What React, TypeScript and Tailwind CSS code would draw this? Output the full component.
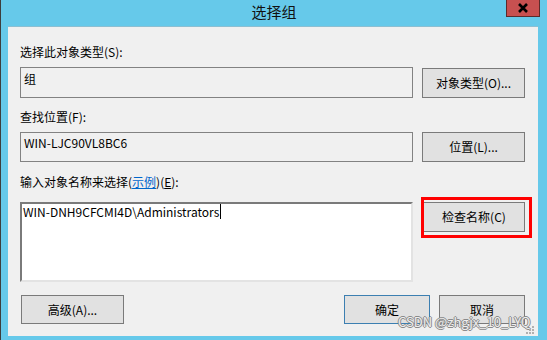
import { ReactNode } from "react";

const font = "font-['Noto_Sans_CJK_SC','Noto_Sans',sans-serif]";

const Button = ({
  children,
  className = "",
  primary = false,
}: {
  children: ReactNode;
  className?: string;
  primary?: boolean;
}) => (
  <div
    className={`flex items-center justify-center bg-[#e1e1e1] border text-[12px] leading-4 text-black ${
      primary ? "border-[#3c7fb1]" : "border-[#7a7a7a]"
    } ${className}`}
  >
    {children}
  </div>
);

const App = () => {
  return (
    <div
      className={`w-[547px] h-[340px] bg-[#66c9ea] border-l border-[#3d3d3d] flex flex-col ${font}`}
    >
      {/* title bar */}
      <div className="relative h-[26px] shrink-0">
        <div className="pt-[2px] text-center text-[15px] leading-5 text-[#111]">选择组</div>
        <div className="absolute right-[7px] top-0 w-[34px] h-[17px] bg-[#c75050] border border-[#5b2b2b] border-t-0 flex items-center justify-center">
          <svg width="12" height="10" viewBox="0 0 12 10">
            <path d="M2 1 L10 9 M10 1 L2 9" stroke="#000" strokeWidth="2.6" />
          </svg>
        </div>
      </div>

      {/* client area */}
      <div className="relative ml-[7px] w-[530px] h-[310px] bg-[#f0f0f0] border-t border-[#8cbfd2] pl-[12px] flex flex-col">
        <div className="mt-[17px] h-4 text-[12px] leading-4 text-black">选择此对象类型(S):</div>
        <div className="mt-[7px] flex items-start">
          <div className="w-[393px] h-[31px] border border-[#828282] pl-[3px] pt-[3px] text-[12px] leading-4 text-black">
            组
          </div>
          <Button className="ml-[9px] mt-[1px] w-[103px] h-[30px]">对象类型(O)...</Button>
        </div>

        <div className="mt-[11px] h-4 text-[12px] leading-4 text-black">查找位置(F):</div>
        <div className="mt-[7px] flex items-start">
          <div className="w-[393px] h-[30px] border border-[#828282] pl-[3px] pt-[2px] text-[12px] leading-4 text-black">
            WIN-LJC90VL8BC6
          </div>
          <Button className="ml-[9px] w-[103px] h-[30px]">位置(L)...</Button>
        </div>

        <div className="mt-[12px] h-4 text-[12px] leading-4 text-black">
          输入对象名称来选择(<span className="text-[#0066cc] underline">示例</span>)(
          <span className="underline">E</span>):
        </div>
        <div className="mt-[12px] flex items-start">
          <div className="w-[393px] h-[80px] bg-white border-2 border-t-[#7a7a7a] border-l-[#7a7a7a] border-r-[#e3e3e3] border-b-[#e3e3e3] pl-[1px] text-[12px] leading-4 text-black flex items-start">
            <span>WIN-DNH9CFCMI4D\Administrators</span>
            <span className="inline-block w-px h-[15px] bg-black ml-px" />
          </div>
          <div className="relative ml-[10px]">
            <Button className="w-[102px] h-[30px]">检查名称(C)</Button>
            <div className="absolute -left-[2px] -top-[5px] w-[111px] h-[41px] border-[3px] border-[#ff0000]" />
          </div>
        </div>

        <div className="mt-[13px] flex items-start">
          <Button className="ml-[1px] w-[103px] h-[29px]">高级(A)...</Button>
          <Button primary className="ml-[220px] w-[86px] h-[29px]">
            确定
          </Button>
          <Button className="ml-[9px] w-[86px] h-[29px]">取消</Button>
        </div>

        {/* watermark */}
        <div className="absolute left-[390px] top-[285px] text-[13px] leading-5 text-[#eeeeee] [text-shadow:1px_0_0_#8a8a8a,-1px_0_0_#8a8a8a,0_1px_0_#8a8a8a,0_-1px_0_#8a8a8a] whitespace-nowrap">
          CSDN @zhgjx_10_LYQ
        </div>
        {/* size grip */}
        <svg className="absolute right-[4px] bottom-[2px]" width="8" height="8" viewBox="0 0 8 8">
          <rect x="6" y="0" width="2" height="2" fill="#b0b0b0" />
          <rect x="3" y="3" width="2" height="2" fill="#b0b0b0" />
          <rect x="6" y="3" width="2" height="2" fill="#b0b0b0" />
          <rect x="0" y="6" width="2" height="2" fill="#b0b0b0" />
          <rect x="3" y="6" width="2" height="2" fill="#b0b0b0" />
          <rect x="6" y="6" width="2" height="2" fill="#b0b0b0" />
        </svg>
      </div>
    </div>
  );
};

export default App;
